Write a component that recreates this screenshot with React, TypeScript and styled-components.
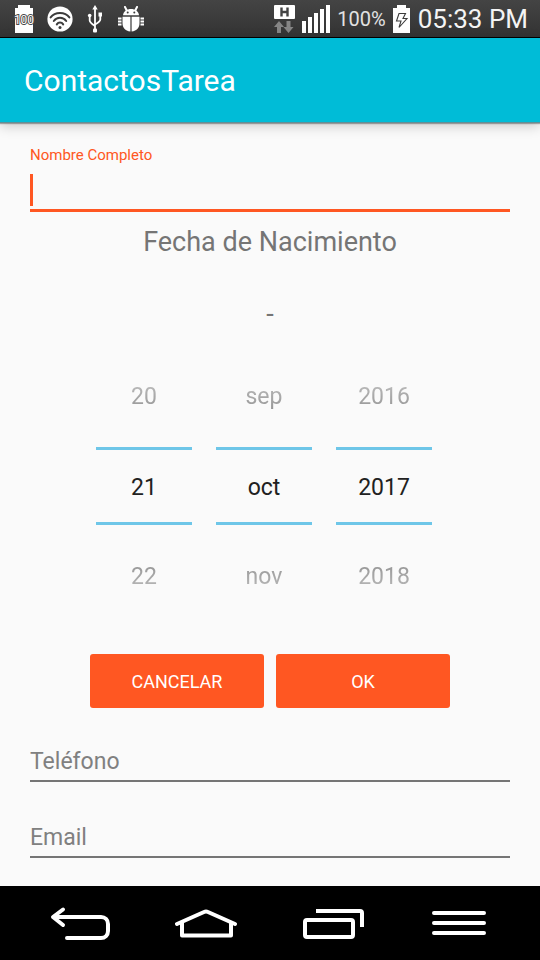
import React, { useState } from 'react';
import styled, { createGlobalStyle } from 'styled-components';

const GlobalStyle = createGlobalStyle`
  *, *::before, *::after { box-sizing: border-box; }
  body { margin: 0; background: #fafafa; }
  body, button, input { font-family: Roboto, "Noto Sans", sans-serif; }
`;

const Screen = styled.div`
  display: flex;
  flex-direction: column;
  min-height: 100vh;
`;

const StatusBar = styled.header`
  display: flex;
  align-items: center;
  justify-content: space-between;
  height: 38px;
  padding: 0 12px 0 13px;
  background: linear-gradient(#444, #333);
  border-bottom: 1px solid #000;
  color: #f4f4f4;
`;

const StatusGroup = styled.div<{ $gap: number }>`
  display: flex;
  align-items: center;
  gap: ${(p) => p.$gap}px;

  svg { display: block; }
`;

const BatteryLevel = styled.span`
  font-size: 20px;
  line-height: 40px;
  color: #e2e2e2;
`;

const Clock = styled.time`
  font-size: 26px;
  line-height: 40px;
`;

const AppBar = styled.div`
  display: flex;
  align-items: center;
  height: 85px;
  padding: 2px 24px 0;
  background: #00bcd7;
  border-bottom: 1px solid #5f8f96;
  box-shadow: 0 1px 1px rgba(0, 0, 0, 0.3), 0 3px 12px rgba(0, 0, 0, 0.2);
`;

const AppTitle = styled.h1`
  margin: 0;
  font-size: 30px;
  font-weight: 400;
  line-height: 40px;
  color: #fff;
`;

const Form = styled.form`
  display: flex;
  flex: 1;
  flex-direction: column;
  padding: 21px 30px 28px;
`;

const FloatingLabel = styled.label`
  font-size: 15px;
  line-height: 22px;
  color: #ff5722;
`;

const ActiveField = styled.div`
  display: flex;
  align-items: flex-end;
  height: 46px;
  padding-bottom: 3px;
  border-bottom: 3px solid #ff5722;
`;

const Caret = styled.span`
  width: 3px;
  height: 32px;
  background: #ff5722;
`;

const ActiveInput = styled.input`
  flex: 1;
  min-width: 0;
  height: 32px;
  padding: 0;
  border: 0;
  outline: 0;
  background: transparent;
  font-size: 23px;
  color: #212121;
`;

const SectionTitle = styled.h2`
  margin: 10px 0 0;
  font-size: 27px;
  font-weight: 400;
  line-height: 40px;
  text-align: center;
  color: #757575;
`;

const ChosenDate = styled.output`
  margin-top: 32px;
  font-size: 27px;
  line-height: 40px;
  text-align: center;
  color: #757575;
`;

const DatePicker = styled.div`
  display: flex;
  justify-content: center;
  gap: 24px;
  margin-top: 33px;
  padding-right: 12px;
`;

const Wheel = styled.div`
  display: flex;
  flex-direction: column;
  width: 96px;
`;

const WheelStep = styled.button<{ $side: 'before' | 'after' }>`
  height: 60px;
  margin: ${(p) => (p.$side === 'before' ? '0 0 20px' : '22px 0 0')};
  padding: 0;
  border: 0;
  background: transparent;
  font-size: 23px;
  line-height: 60px;
  color: #7c7c7c;
  mask-image: linear-gradient(
    ${(p) => (p.$side === 'before' ? 'to bottom' : 'to top')},
    rgba(0, 0, 0, 0.3),
    #000
  );
`;

const WheelValue = styled.input`
  width: 100%;
  height: 78px;
  padding: 2px 0 0;
  border: solid #6ec6e8;
  border-width: 3px 0;
  outline: 0;
  background: transparent;
  font-size: 23px;
  text-align: center;
  color: #212121;
`;

const Actions = styled.div`
  display: flex;
  justify-content: center;
  gap: 12px;
  margin-top: 47px;
`;

const ActionButton = styled.button`
  width: 174px;
  height: 54px;
  border: 0;
  border-radius: 3px;
  background: #ff5722;
  font-size: 18px;
  color: #fff;
`;

const LaterFields = styled.div`
  display: flex;
  flex-direction: column;
  gap: 32px;
  margin-top: 30px;
`;

const TextField = styled.input`
  width: 100%;
  height: 44px;
  padding: 4px 0 0;
  border: 0;
  border-bottom: 2px solid #757575;
  border-radius: 0;
  outline: 0;
  background: transparent;
  font-size: 23px;
  color: #212121;

  &::placeholder { color: #808080; opacity: 1; }
`;

const NavBar = styled.nav`
  display: grid;
  grid-template-columns: repeat(4, 1fr);
  height: 74px;
  padding: 0 18px;
  background: #000;
`;

const NavButton = styled.button`
  display: flex;
  align-items: center;
  justify-content: center;
  padding: 0;
  border: 0;
  background: transparent;

  svg { display: block; }
`;

const BatteryFullIcon = () => (
  <svg width="20" height="28" viewBox="0 0 20 28" overflow="visible" aria-hidden="true">
    <path d="M5 0h12v3h3v25H2V3h3z" fill="#fff" />
    <text
      x="11"
      y="19"
      textAnchor="middle"
      fontFamily="Roboto, sans-serif"
      fontSize="12"
      fontWeight="400"
      fill="#fff"
      stroke="#4a4a4a"
      strokeWidth="2"
      paintOrder="stroke"
    >
      100
    </text>
  </svg>
);

const WifiIcon = () => (
  <svg width="26" height="26" viewBox="0 0 26 26" aria-hidden="true">
    <circle cx="13" cy="13" r="12.6" fill="#fff" />
    <g fill="none" stroke="#3c3c3c" strokeWidth="2" strokeLinecap="round">
      <path d="M3.6 11.4C8 5.4 18 5.4 22.4 11.4" />
      <path d="M6.8 15C9.8 10.800 16.200 10.800 19.200 15" />
      <path d="M9.8 18.400c1.600-2.400 4.800-2.400 6.400 0" />
    </g>
    <circle cx="13" cy="21.4" r="1.500" fill="#3c3c3c" />
  </svg>
);

const UsbIcon = () => (
  <svg width="17" height="28" viewBox="0 0 17 28" aria-hidden="true">
    <g fill="none" stroke="#fff" strokeWidth="1.800">
      <path d="M8 3v22M2.700 11v4.500q0 2 5.300 5.500M13.300 10v4.500q0 2-5.300 5" />
    </g>
    <path d="M8 0l2.700 4.500H5.300z" fill="#fff" />
    <rect x="6" y="23.500" width="4" height="4" rx="1" fill="#fff" />
    <circle cx="2.700" cy="10.500" r="1.800" fill="#fff" />
    <path d="M11.500 7.500H15v4h-3.500z" fill="#fff" />
  </svg>
);

const DebugIcon = () => (
  <svg width="26" height="26" viewBox="0 0 26 26" aria-hidden="true">
    <path d="M5 9.200C5.500 5 9 3 13 3s7.500 2 8 6.200z" fill="#fff" />
    <path d="M8.500 4L7 1M17.500 4L19 1" stroke="#fff" strokeWidth="2" strokeLinecap="round" />
    <circle cx="9.700" cy="6.400" r="1" fill="#3c3c3c" />
    <circle cx="16.300" cy="6.400" r="1" fill="#3c3c3c" />
    <path d="M4.500 10.700H12.400V25.500C7 25 4.500 21.500 4.500 17zM13.600 10.700H21.500V17C21.500 21.500 19 25 13.600 25.500z" fill="#fff" />
    <path d="M0 12.500h3.500M0 15.500h3.500M0 18.500h3.500M22.500 12.500h3.500M22.500 15.500h3.500M22.500 18.500h3.500" stroke="#fff" strokeWidth="1.800" />
  </svg>
);

const NetworkIcon = () => (
  <svg width="21" height="28" viewBox="0 0 21 28" aria-hidden="true">
    <rect width="21" height="14" rx="1" fill="#fff" />
    <path d="M7.500 2.500v9M13.500 2.500v9M7.500 7h6" stroke="#444" strokeWidth="2.400" fill="none" />
    <path d="M5 16l5 6H7v6H3v-6H0zM14.500 28l-5-6h3v-6h4v6h3z" fill="#858585" />
  </svg>
);

const SignalIcon = () => (
  <svg width="28" height="28" viewBox="0 0 28 28" aria-hidden="true">
    <path d="M0 16h4v12H0zM6 12h4v16H6zM12 8h4v20h-4zM18 4h4v24h-4zM24 0h4v28h-4z" fill="#fff" />
  </svg>
);

const ChargingIcon = () => (
  <svg width="18" height="28" viewBox="0 0 18 28" aria-hidden="true">
    <path d="M4 0h9v3h4v25H0V3h4z" fill="#fff" />
    <path d="M6 8.500h6.500L10 13.500h4L6 22.500l2-6.500H3.500z" fill="none" stroke="#3c3c3c" strokeWidth="1.100" />
  </svg>
);

const BackIcon = () => (
  <svg width="64" height="36" viewBox="0 0 64 36" fill="none" stroke="#fff" strokeWidth="4" strokeLinecap="round" strokeLinejoin="round" aria-hidden="true">
    <path d="M14 4.500L4 12l10 8M5 12h47c4 0 7 3 7 7v7c0 4-3 7-7 7H18" />
  </svg>
);

const HomeIcon = () => (
  <svg width="64" height="32" viewBox="0 0 64 32" fill="none" stroke="#fff" strokeWidth="4" aria-hidden="true">
    <path d="M2 17L29 5q2-1 4 0L60 17" strokeLinecap="round" />
    <path d="M7 15v13.500h49V15" strokeLinejoin="round" />
  </svg>
);

const RecentsIcon = () => (
  <svg width="64" height="34" viewBox="-2 -2 64 34" fill="none" stroke="#fff" strokeWidth="4" aria-hidden="true">
    <rect x="2" y="12" width="48" height="17" rx="2" />
    <path d="M13 3h44q2 0 2 2v14" />
  </svg>
);

const MenuIcon = () => (
  <svg width="54" height="24" viewBox="0 0 54 24" stroke="#fff" strokeWidth="4" strokeLinecap="round" aria-hidden="true">
    <path d="M2 2h50M2 12h50M2 22h50" />
  </svg>
);

const MONTHS = ['ene', 'feb', 'mar', 'abr', 'may', 'jun', 'jul', 'ago', 'sep', 'oct', 'nov', 'dic'];

interface PickerWheelProps {
  label: string;
  value: number;
  format?: (value: number) => string;
  onChange: (value: number) => void;
}

function PickerWheel({ label, value, format = String, onChange }: PickerWheelProps) {
  return (
    <Wheel role="group" aria-label={label}>
      <WheelStep type="button" $side="before" onClick={() => onChange(value - 1)}>
        {format(value - 1)}
      </WheelStep>
      <WheelValue aria-label={label} value={format(value)} readOnly />
      <WheelStep type="button" $side="after" onClick={() => onChange(value + 1)}>
        {format(value + 1)}
      </WheelStep>
    </Wheel>
  );
}

export default function App() {
  const [day, setDay] = useState(21);
  const [month, setMonth] = useState(9);
  const [year, setYear] = useState(2017);

  const wrapDay = (n: number) => ((n + 30) % 31) + 1;
  const wrapMonth = (n: number) => (n + 12) % 12;

  return (
    <Screen>
      <GlobalStyle />
      <StatusBar>
        <StatusGroup $gap={14}>
          <BatteryFullIcon />
          <WifiIcon />
          <UsbIcon />
          <DebugIcon />
        </StatusGroup>
        <StatusGroup $gap={7}>
          <NetworkIcon />
          <SignalIcon />
          <BatteryLevel>100%</BatteryLevel>
          <ChargingIcon />
          <Clock>05:33 PM</Clock>
        </StatusGroup>
      </StatusBar>
      <AppBar>
        <AppTitle>ContactosTarea</AppTitle>
      </AppBar>
      <Form onSubmit={(e) => e.preventDefault()}>
        <FloatingLabel htmlFor="name">Nombre Completo</FloatingLabel>
        <ActiveField>
          <Caret />
          <ActiveInput id="name" type="text" />
        </ActiveField>
        <SectionTitle>Fecha de Nacimiento</SectionTitle>
        <ChosenDate>-</ChosenDate>
        <DatePicker>
          <PickerWheel label="Día" value={day} format={(n) => String(wrapDay(n))} onChange={(n) => setDay(wrapDay(n))} />
          <PickerWheel label="Mes" value={month} format={(n) => MONTHS[wrapMonth(n)]} onChange={(n) => setMonth(wrapMonth(n))} />
          <PickerWheel label="Año" value={year} onChange={setYear} />
        </DatePicker>
        <Actions>
          <ActionButton type="button">CANCELAR</ActionButton>
          <ActionButton type="submit">OK</ActionButton>
        </Actions>
        <LaterFields>
          <TextField type="tel" placeholder="Teléfono" aria-label="Teléfono" />
          <TextField type="email" placeholder="Email" aria-label="Email" />
        </LaterFields>
      </Form>
      <NavBar>
        <NavButton type="button" aria-label="Atrás"><BackIcon /></NavButton>
        <NavButton type="button" aria-label="Inicio"><HomeIcon /></NavButton>
        <NavButton type="button" aria-label="Recientes"><RecentsIcon /></NavButton>
        <NavButton type="button" aria-label="Menú"><MenuIcon /></NavButton>
      </NavBar>
    </Screen>
  );
}
